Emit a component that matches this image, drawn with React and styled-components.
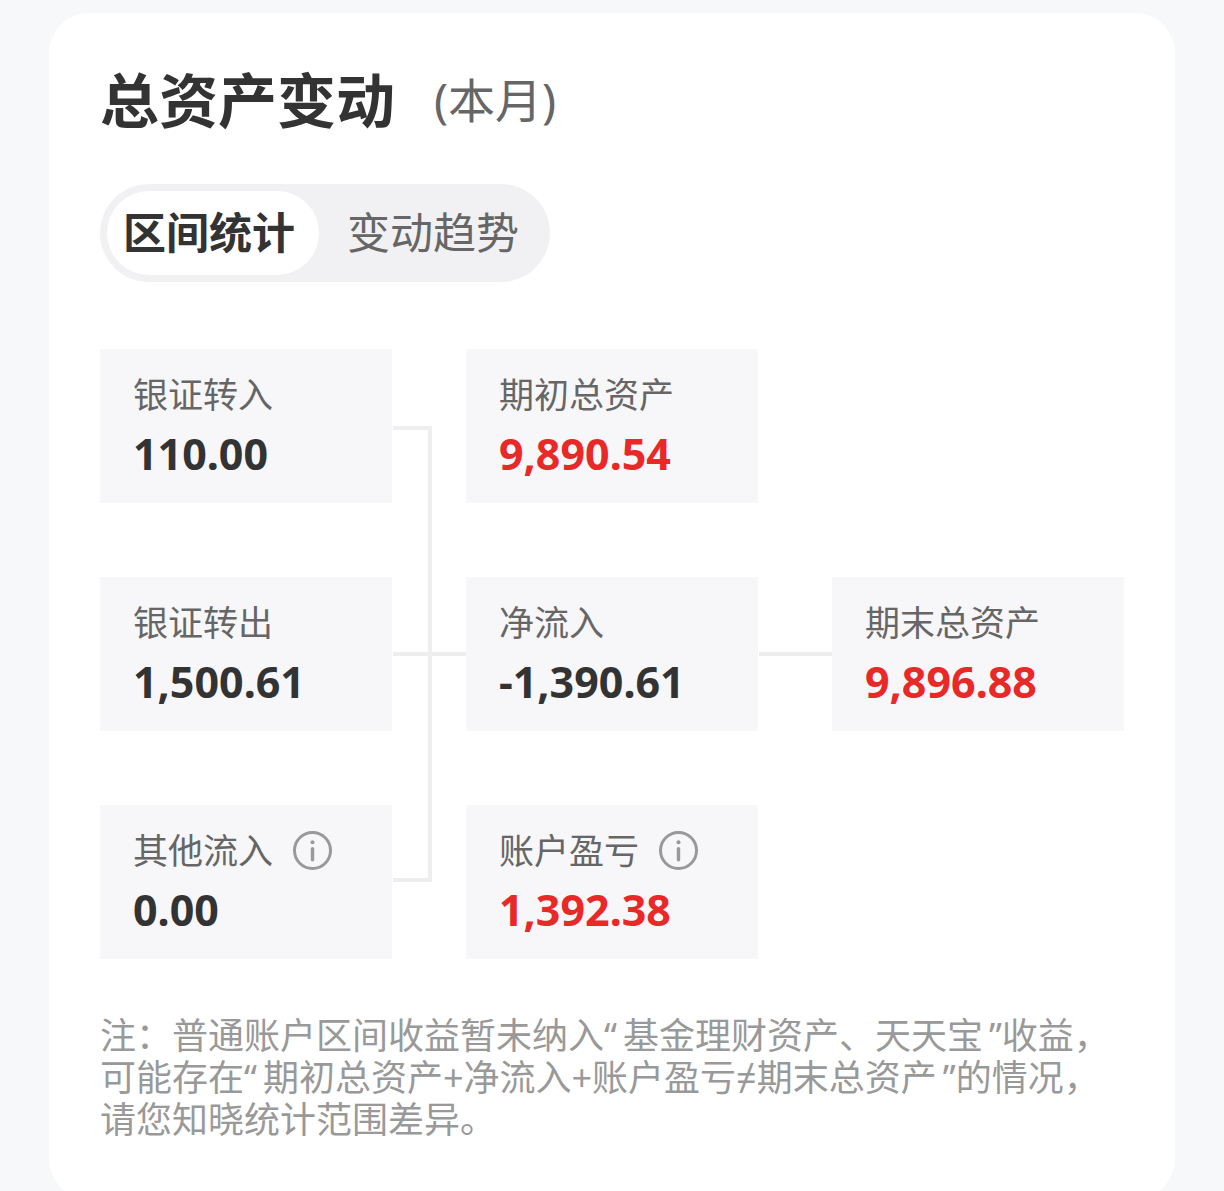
import React, { useState } from 'react';
import styled, { createGlobalStyle } from 'styled-components';

const GlobalStyle = createGlobalStyle`
  html {
    scrollbar-width: none;
  }

  body {
    margin: 0;
    background: #f7f8fa;
    color: #333;
    font-family: "Noto Sans", "Noto Sans CJK SC", sans-serif;
  }

  button {
    font-family: inherit;
    border: 0;
    cursor: pointer;
  }
`;

const Page = styled.main`
  display: flow-root;
`;

const Card = styled.section`
  margin: 13px 49px 0;
  padding: 51px 51px 58px;
  background: #fff;
  border-radius: 40px;
`;

const Header = styled.header`
  display: flex;
  align-items: center;
  gap: 39px;
  line-height: 72px;
`;

const Title = styled.h1`
  margin: 0;
  font-size: 59px;
  font-weight: 700;
`;

const Period = styled.span`
  font-size: 47px;
  color: #666;
`;

const Tabs = styled.div`
  display: inline-flex;
  gap: 4px;
  margin: 48px 0 67px;
  padding: 7px;
  background: #f1f1f3;
  border-radius: 49px;
  vertical-align: top;
`;

const Tab = styled.button`
  padding: ${({ $active }) => ($active ? '0 24px 0 16px' : '0 24px')};
  font-size: 43px;
  line-height: 84px;
  font-weight: ${({ $active }) => ($active ? 700 : 400)};
  color: ${({ $active }) => ($active ? '#333' : '#666')};
  background: ${({ $active }) => ($active ? '#fff' : 'transparent')};
  border-radius: 42px;
`;

const Flow = styled.div`
  display: grid;
  grid-template-columns: minmax(0, 1fr) 74px minmax(0, 1fr) 74px minmax(0, 1fr);
  row-gap: 74px;
`;

const Cell = styled.div`
  grid-column: ${({ $col }) => $col * 2 - 1};
  grid-row: ${({ $row }) => $row};
  padding: 24px 33px 22px;
  background: #f7f7f9;
`;

const Label = styled.div`
  display: flex;
  align-items: center;
  gap: 20px;
  font-size: 35px;
  line-height: 44px;
  color: #666;
  white-space: nowrap;
`;

const Value = styled.div`
  margin-top: 10px;
  font-size: 43px;
  line-height: 54px;
  font-weight: 700;
  color: ${({ $red }) => ($red ? '#e92828' : '#333')};
`;

const InfoButton = styled.button`
  display: flex;
  padding: 0;
  background: none;
  color: #999;
`;

/* joins the three cells of the first column */
const Bracket = styled.div`
  grid-column: 2;
  grid-row: 1 / 4;
  box-sizing: border-box;
  width: calc(50% + 2px);
  margin: 77px 0 77px 1px;
  border: 4px solid #eee;
  border-left: 0;
`;

const Link = styled.div`
  grid-column: ${({ $after }) => $after * 2};
  grid-row: 2;
  align-self: center;
  height: 4px;
  margin-left: 1px;
  background: #eee;
`;

const Note = styled.p`
  margin: 56px 0 0;
  font-size: 36px;
  line-height: 42px;
  color: #999;
  white-space: pre-line;
`;

const CELLS = [
  { col: 1, row: 1, label: '银证转入', value: '110.00' },
  { col: 2, row: 1, label: '期初总资产', value: '9,890.54', red: true },
  { col: 1, row: 2, label: '银证转出', value: '1,500.61' },
  { col: 2, row: 2, label: '净流入', value: '-1,390.61' },
  { col: 3, row: 2, label: '期末总资产', value: '9,896.88', red: true },
  { col: 1, row: 3, label: '其他流入', value: '0.00', info: true },
  { col: 2, row: 3, label: '账户盈亏', value: '1,392.38', red: true, info: true },
];

const TABS = ['区间统计', '变动趋势'];

// \u2006 is a narrow space inside the quotes
const NOTE = [
  '注：普通账户区间收益暂未纳入“\u2006基金理财资产、天天宝\u2006”收益，',
  '可能存在“\u2006期初总资产+净流入+账户盈亏≠期末总资产\u2006”的情况，',
  '请您知晓统计范围差异。',
].join('\n');

function InfoIcon() {
  return (
    <svg width="40" height="40" viewBox="0 0 40 40" fill="none" aria-hidden="true">
      <circle cx="19.5" cy="19.5" r="18" stroke="currentColor" strokeWidth="3" />
      <circle cx="19.5" cy="11.2" r="2" fill="currentColor" />
      <path d="M19.5 17.6v11.2" stroke="currentColor" strokeWidth="3.4" strokeLinecap="round" />
    </svg>
  );
}

function App() {
  const [tab, setTab] = useState(TABS[0]);

  return (
    <Page lang="zh-CN">
      <GlobalStyle />
      <Card>
        <Header>
          <Title>总资产变动</Title>
          <Period>(本月)</Period>
        </Header>
        <Tabs role="tablist">
          {TABS.map((name) => (
            <Tab
              key={name}
              type="button"
              role="tab"
              aria-selected={tab === name}
              $active={tab === name}
              onClick={() => setTab(name)}
            >
              {name}
            </Tab>
          ))}
        </Tabs>
        <Flow>
          <Bracket />
          <Link $after={1} />
          <Link $after={2} />
          {CELLS.map((cell) => (
            <Cell key={cell.label} $col={cell.col} $row={cell.row}>
              <Label>
                {cell.label}
                {cell.info && (
                  <InfoButton type="button" aria-label={`${cell.label}说明`}>
                    <InfoIcon />
                  </InfoButton>
                )}
              </Label>
              <Value $red={cell.red}>{cell.value}</Value>
            </Cell>
          ))}
        </Flow>
        <Note>{NOTE}</Note>
      </Card>
    </Page>
  );
}

export default App;
